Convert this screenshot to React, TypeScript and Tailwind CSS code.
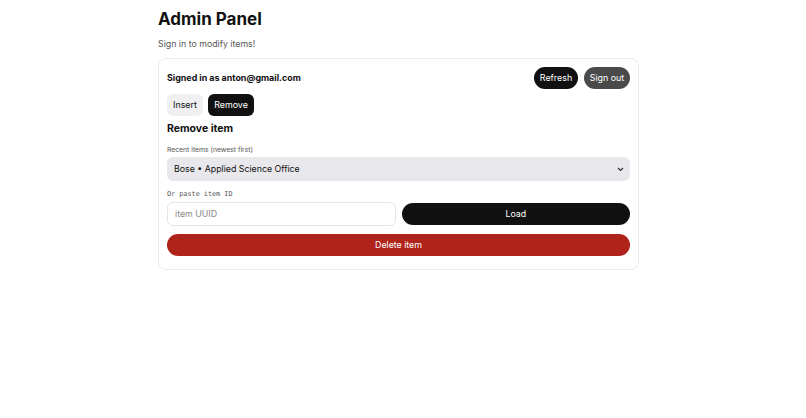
import React from "react";

export default function App() {
  return (
    <div className="min-h-screen bg-white text-[#111]" style={{ fontFamily: "Inter, 'Noto Sans', sans-serif" }}>
      <div className="ml-[158px] w-[481px] pt-[9px]">
        <h1 className="text-[17px] leading-[20px] font-bold">Admin Panel</h1>
        <p className="mt-[9px] text-[8.8px] leading-[12px] text-[#555]">Sign in to modify items!</p>
        <div className="mt-[8px] rounded-[8px] border border-[#ececec] px-[8px] pt-[8px] pb-[13px]">
          <div className="flex items-center justify-between">
            <div className="text-[8.9px] font-bold">Signed in as anton@gmail.com</div>
            <div className="flex gap-[6px]">
              <button className="h-[22px] w-[44px] rounded-full bg-[#111] text-white text-[8.9px]">Refresh</button>
              <button className="h-[22px] w-[46px] rounded-full bg-[#4a4a4a] text-white text-[8.9px]">Sign out</button>
            </div>
          </div>
          <div className="mt-[5px] flex gap-[5px]">
            <button className="h-[22px] w-[36px] rounded-[6px] bg-[#f0f0f2] text-[8.9px] text-[#111]">Insert</button>
            <button className="h-[22px] w-[46px] rounded-[6px] bg-[#111] text-white text-[8.9px]">Remove</button>
          </div>
          <h2 className="mt-[6px] text-[10.5px] leading-[14px] font-bold">Remove item</h2>
          <div className="mt-[9px] text-[6.8px] leading-[9px] text-[#555]">Recent items (newest first)</div>
          <div className="mt-[3px] h-[24px] rounded-[6px] bg-[#e8e8ec] flex items-center justify-between px-[7px]">
            <span className="text-[8.8px] text-[#111]">Bose • Applied Science Office</span>
            <svg width="7" height="5" viewBox="0 0 7 5" className="mr-[-1px]">
              <path d="M1 1l2.5 2.5L6 1" fill="none" stroke="#333" strokeWidth="1.2" />
            </svg>
          </div>
          <div className="mt-[9px] text-[6.8px] leading-[9px] text-[#555]" style={{ fontFamily: "'DejaVu Sans Mono', monospace" }}>Or paste item ID</div>
          <div className="mt-[3px] grid grid-cols-2 gap-[6px] items-center">
            <div className="h-[24px] rounded-[6px] border border-[#e6e6e6] flex items-center px-[7px] text-[8.8px] text-[#888]">item UUID</div>
            <button className="h-[22px] rounded-full bg-[#111] text-white text-[8.8px]">Load</button>
          </div>
          <button className="mt-[8px] w-full h-[22px] rounded-full bg-[#b0231a] text-white text-[8.8px]">Delete item</button>
        </div>
      </div>
    </div>
  );
}
